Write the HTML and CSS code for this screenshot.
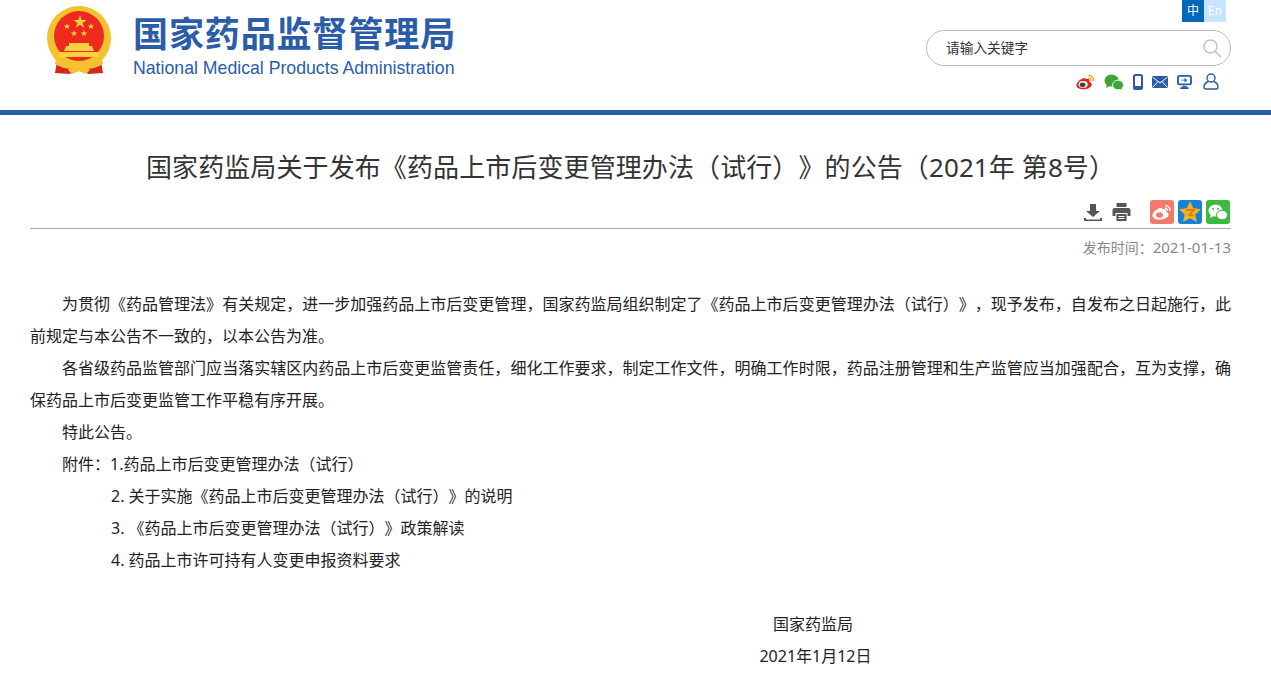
FILE: index.html
```html
<!DOCTYPE html>
<html lang="zh-CN">
<head>
    <meta charset="UTF-8">
    <title>国家药监局关于发布《药品上市后变更管理办法（试行）》的公告（2021年 第8号）</title>
    <link rel="stylesheet" href="styles.css">
</head>
<body>
    <div class="header">
        <div class="logo">
            <svg class="emblem" viewBox="0 0 68 72" width="68" height="72">
                <!-- ribbon behind the ring -->
                <path d="M13 52 L10 69 L24 70 L34 67 L44 70 L58 69 L55 52 Z" fill="#d9261c"/>
                <circle cx="34" cy="34" r="32" fill="#f2c230"/>
                <circle cx="34" cy="32" r="25" fill="#ee2a20"/>
                <path d="M35 11l1.600 4.900h5.100l-4.100 3 1.600 4.900-4.200-3-4.200 3 1.600-4.900-4.100-3h5.100z" fill="#f7d23c"/>
                <path d="M22 19l.8 2.400h2.500l-2 1.500.8 2.400-2.100-1.500-2.100 1.500.8-2.400-2-1.500h2.500zM46 19l.8 2.400h2.500l-2 1.500.8 2.400-2.100-1.500-2.100 1.500.8-2.400-2-1.500h2.500zM29 26l.8 2.400h2.500l-2 1.500.8 2.400-2.100-1.500-2.100 1.500.8-2.400-2-1.500h2.500zM39 26l.8 2.400h2.500l-2 1.500.8 2.400-2.100-1.500-2.100 1.500.8-2.400-2-1.500h2.500z" fill="#f7d23c"/>
                <path d="M24 39h20v3h3l2 5H19l2-5h3zM14 48h40v5H14z" fill="#f7d23c"/>
                <path d="M11 54c8 7 15 8 23 5 8 3 15 2 23-5l1 6c-8 5-16 6-24 3-8 3-16 2-24-3z" fill="#f2c230"/>
                <path d="M26 60h16v3l3 3-4 4-7-3-7 3-4-4 3-3z" fill="#f2c230"/>
            </svg>
            <div class="logo-text">
                <div class="logo-cn">国家药品监督管理局</div>
                <div class="logo-en">National Medical Products Administration</div>
            </div>
        </div>
        <div class="tools">
            <div class="lang">
                <a class="lang-on">中</a>
                <a class="lang-off">En</a>
            </div>
            <div class="search">
                <span class="search-text">请输入关键字</span>
                <svg viewBox="0 0 20 20" width="20" height="20" fill="none" stroke="#c4c4c4" stroke-width="1.5">
                    <circle cx="8.500" cy="8.500" r="6.500"/>
                    <path d="M13 13l6 6"/>
                </svg>
            </div>
            <div class="links">
                <svg viewBox="0 0 20 16" width="19" height="16">
                    <path d="M8 4C4 5 0 9 .5 12c.5 3 5 4 9 3.500 4-.5 7-2.500 7-5 0-2-2-2.500-2.500-2.800.5-1.500 0-3-2-3-1 0-2 .5-2 .5.300-1-.5-1.500-2-1.200z" fill="#e2231a"/>
                    <ellipse cx="7.500" cy="10.500" rx="4.800" ry="3.600" fill="#fff"/>
                    <ellipse cx="7" cy="11" rx="3" ry="2.400" fill="#444"/>
                    <path d="M13 1c3.200 0 6 2.500 5.500 6M13 3.800c1.600 0 3 1.200 2.700 3.200" fill="none" stroke="#f0a020" stroke-width="1.5"/>
                </svg>
                <svg viewBox="0 0 20 16" width="20" height="16" fill="#3fa535">
                    <ellipse cx="7.500" cy="6.500" rx="7" ry="6"/>
                    <path d="M3 10l-1 4 4-2z"/>
                    <ellipse cx="14" cy="11" rx="5.500" ry="4.800" stroke="#fff" stroke-width=".8"/>
                    <path d="M16 14l2 2-.5-3z"/>
                </svg>
                <svg viewBox="0 0 10 16" width="10" height="16">
                    <rect x="1" y="1" width="8" height="14" rx="1.500" fill="none" stroke="#2b5ca8" stroke-width="2"/>
                    <path d="M1 12h8v3H1z" fill="#2b5ca8"/>
                </svg>
                <svg viewBox="0 0 16 12" width="16" height="12">
                    <rect width="16" height="12" rx="1" fill="#2b5ca8"/>
                    <path d="M.5 1L8 7l7.500-6M.5 11.500L6 5.500M15.500 11.500L10 5.500" fill="none" stroke="#fff"/>
                </svg>
                <svg viewBox="0 0 16 15" width="15" height="14">
                    <rect x="1" y="1" width="14" height="9" rx="1.500" fill="none" stroke="#2b5ca8" stroke-width="2"/>
                    <path d="M6 12h4v1.500h2V15H4v-1.500h2zM4.500 5.500h5M8 3.500l2.500 2L8 7.500" fill="#2b5ca8" stroke="#2b5ca8" stroke-width=".8"/>
                </svg>
                <svg class="link-user" viewBox="0 0 16 17" width="16" height="17" fill="none" stroke="#2b5ca8" stroke-width="1.4">
                    <circle cx="8" cy="5" r="4"/>
                    <path d="M5.500 8.500C2.500 9.500 1 12 1 14c0 1.500 1 2 2 2h10c1 0 2-.5 2-2 0-2-1.500-4.500-4.500-5.500"/>
                </svg>
            </div>
        </div>
    </div>

    <div class="article">
        <h1>国家药监局关于发布《药品上市后变更管理办法（试行）》的公告（2021年 第8号）</h1>
        <div class="share">
            <svg class="tool-icon" viewBox="0 0 18 18" width="18" height="18" fill="#555">
                <path d="M6 1h6v7h4l-7 6-7-6h4zM0 15h2v1.500h14V15h2v3H0z"/>
            </svg>
            <svg class="tool-icon" viewBox="0 0 18 18" width="19" height="18" fill="#555">
                <path d="M4 0h10v4H4zM2 5h14a2 2 0 0 1 2 2v6h-3v-3H3v3H0V7a2 2 0 0 1 2-2zM4 11h10v7H4zM6 13v1h6v-1zM6 15v1h6v-1z" fill-rule="evenodd"/>
            </svg>
            <span class="share-btn share-weibo">
                <svg viewBox="0 0 20 16" width="20" height="16" fill="#fff">
                    <path d="M8 4C4 5 0 9 .5 12c.5 3 5 4 9 3.500 4-.5 7-2.500 7-5 0-2-2-2.500-2.500-2.800.5-1.500 0-3-2-3-1 0-2 .5-2 .5.300-1-.5-1.500-2-1.200z"/>
                    <ellipse cx="7.500" cy="11" rx="3.500" ry="2.800" fill="#f47a6c"/>
                    <path d="M13 1.500c3 0 5.500 2.500 5 5.500M13 4c1.500 0 2.800 1.300 2.500 3" fill="none" stroke="#fff" stroke-width="1.4"/>
                </svg>
            </span>
            <span class="share-btn share-qzone">
                <svg viewBox="0 0 20 20" width="22" height="22">
                    <path d="M10 0l3 6.600 7 .8-5.200 4.800 1.500 7L10 15.600 3.700 19.200l1.500-7L0 7.400l7-.8z" fill="#f7b21c"/>
                    <path d="M6.500 8h7l-4 5h4" fill="none" stroke="#d9791a" stroke-width="1.5"/>
                </svg>
            </span>
            <span class="share-btn share-wechat">
                <svg viewBox="0 0 20 16" width="20" height="16" fill="#fff">
                    <ellipse cx="7.500" cy="6.500" rx="7" ry="6"/>
                    <path d="M3 10l-1 4 4-2z"/>
                    <ellipse cx="14" cy="11" rx="5.500" ry="4.800" stroke="#3cba40"/>
                    <circle cx="5" cy="5" r="1" fill="#3cba40"/>
                    <circle cx="10" cy="5" r="1" fill="#3cba40"/>
                </svg>
            </span>
        </div>
        <div class="date">发布时间：<span class="date-num">2021-01-13</span></div>
        <div class="content">
            <p class="indent">为贯彻《药品管理法》有关规定，进一步加强药品上市后变更管理，国家药监局组织制定了《药品上市后变更管理办法（试行）》，现予发布，自发布之日起施行，此前规定与本公告不一致的，以本公告为准。</p>
            <p class="indent">各省级药品监管部门应当落实辖区内药品上市后变更监管责任，细化工作要求，制定工作文件，明确工作时限，药品注册管理和生产监管应当加强配合，互为支撑，确保药品上市后变更监管工作平稳有序开展。</p>
            <p class="indent">特此公告。</p>
            <p class="indent">附件：1.药品上市后变更管理办法（试行）</p>
            <p class="attach">2. 关于实施《药品上市后变更管理办法（试行）》的说明</p>
            <p class="attach">3. 《药品上市后变更管理办法（试行）》政策解读</p>
            <p class="attach">4. 药品上市许可持有人变更申报资料要求</p>
            <p class="blank">&nbsp;</p>
            <p class="sign sign-org">国家药监局</p>
            <p class="sign sign-date">2021年1月12日</p>
        </div>
    </div>
</body>
</html>
```

FILE: styles.css
```css
body {
    margin: 0;
    font-family: "Noto Sans", "Noto Sans CJK SC", sans-serif;
    color: #333;
    background-color: #fff;
    overflow-x: hidden;
    text-spacing-trim: space-all; /* keep full width punctuation */
}
svg {
    display: block;
}
.header {
    height: 110px;
    padding: 0 40px 0 45px;
    display: flex;
    justify-content: space-between;
    border-bottom: 5px solid #2b5ca8;
}
.logo {
    display: flex;
    align-items: flex-start;
    gap: 21px;
    padding-top: 4px;
}
.logo-text {
    color: #2b5ca8;
}
.logo-cn {
    font-size: 35px;
    font-weight: bold;
    line-height: 42px;
    letter-spacing: 0.9px;
    margin-top: 9px;
    margin-left: -1px;
    white-space: nowrap;
}
.logo-en {
    font-family: "Liberation Sans", sans-serif;
    font-size: 17.7px;
    line-height: 20px;
    margin-top: 3px;
    margin-left: -1px;
    white-space: nowrap;
}
.tools {
    width: 305px;
    display: flex;
    flex-direction: column;
    align-items: flex-end;
}
.lang {
    display: flex;
    margin-right: 5px;
    font-size: 12px;
    line-height: 22px;
    text-align: center;
}
.lang a {
    width: 22px;
    height: 22px;
}
.lang-on {
    background-color: #0068b7;
    color: #fff;
}
.lang-off {
    background-color: #c6e4fd;
    color: #fff;
}
.search {
    box-sizing: border-box;
    width: 305px;
    height: 36px;
    margin-top: 8px;
    padding: 0 8px 0 19px;
    border: 1px solid #bbb;
    border-radius: 18px;
    display: flex;
    align-items: center;
    justify-content: space-between;
    font-size: 13.7px;
    color: #333;
}
.search-text {
    padding-bottom: 2px;
}
.links {
    display: flex;
    align-items: center;
    gap: 9px;
    margin-top: 7px;
    margin-right: 12px;
}
.link-user {
    margin-left: 2px;
}
.article {
    padding: 0 40px 0 30px;
}
h1 {
    margin: 34px 0 0;
    font-size: 26px;
    font-weight: normal;
    line-height: 36px;
    letter-spacing: 0.1px;
    text-align: center;
    color: #333;
}
.share {
    height: 26px;
    margin-top: 14px;
    padding: 0 1px 3px 0;
    display: flex;
    align-items: center;
    justify-content: flex-end;
    border-bottom: 1px solid #aaa;
}
.tool-icon {
    margin-right: 10px;
}
.share-btn {
    width: 24px;
    height: 24px;
    margin-left: 4px;
    border-radius: 3px;
    display: flex;
    align-items: center;
    justify-content: center;
}
.share-weibo {
    margin-left: 9px;
    background-color: #f47a6c;
}
.share-qzone {
    background-color: #1681d9;
}
.share-wechat {
    background-color: #3cba40;
}
.date {
    margin-top: 8px;
    font-size: 14px;
    line-height: 20px;
    text-align: right;
    color: #888;
}
.date-num {
    font-size: 15px;
}
.content {
    margin-top: 30px;
    font-size: 16px;
    line-height: 32px;
    color: #222;
}
.content p {
    margin: 0;
    text-align: justify;
}
.content .indent {
    text-indent: 32px;
}
.content .attach {
    padding-left: 81px;
}
.content .sign {
    text-align: center;
}
.sign-org {
    padding-left: 365px;
}
.sign-date {
    padding-left: 370px;
}
.content .blank {
    height: 32px;
}
```
